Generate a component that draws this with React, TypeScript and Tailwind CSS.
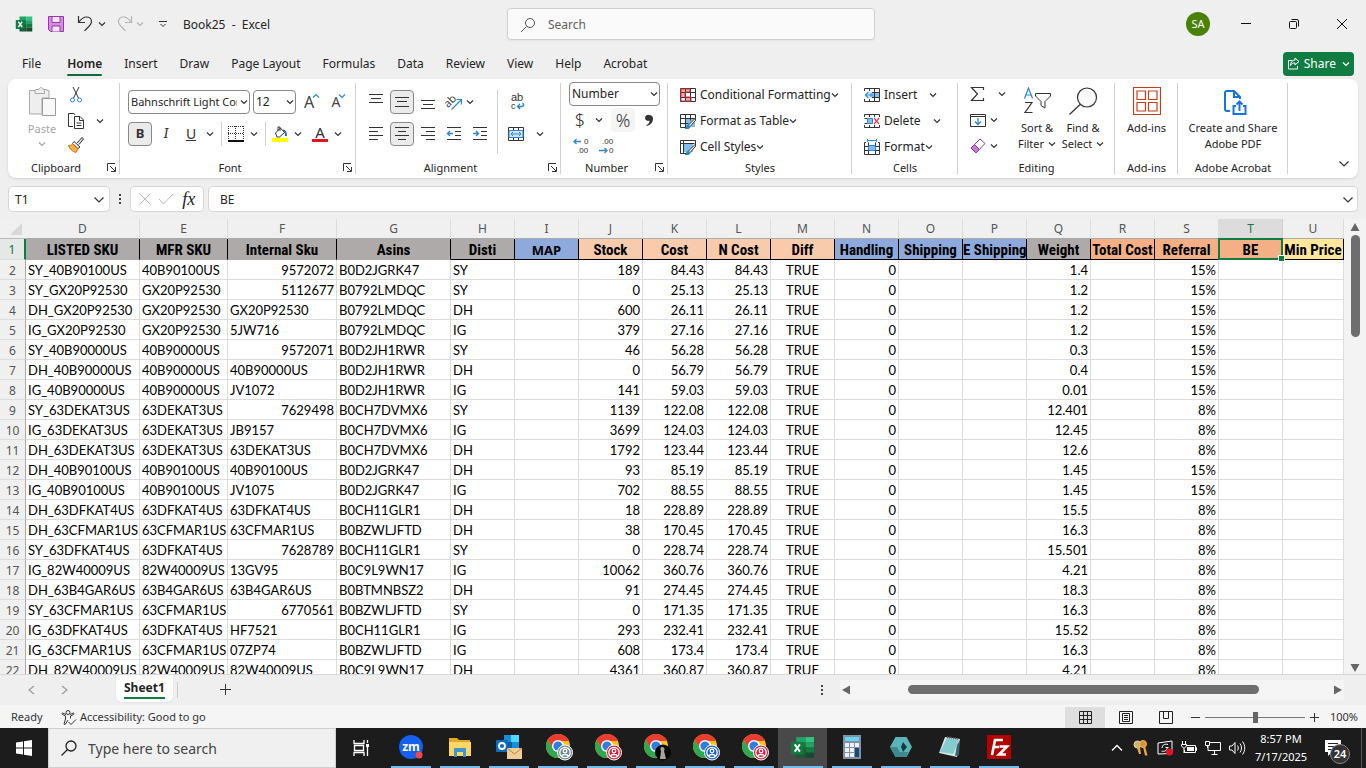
import React from 'react';
import clsx from 'clsx';

type Row = [string, string, string | number, string, string, string, string, string, string];

const rows: Row[] = [
  ['SY_40B90100US', '40B90100US', 9572072, 'B0D2JGRK47', 'SY', '189', '84.43', '1.4', '15%'],
  ['SY_GX20P92530', 'GX20P92530', 5112677, 'B0792LMDQC', 'SY', '0', '25.13', '1.2', '15%'],
  ['DH_GX20P92530', 'GX20P92530', 'GX20P92530', 'B0792LMDQC', 'DH', '600', '26.11', '1.2', '15%'],
  ['IG_GX20P92530', 'GX20P92530', '5JW716', 'B0792LMDQC', 'IG', '379', '27.16', '1.2', '15%'],
  ['SY_40B90000US', '40B90000US', 9572071, 'B0D2JH1RWR', 'SY', '46', '56.28', '0.3', '15%'],
  ['DH_40B90000US', '40B90000US', '40B90000US', 'B0D2JH1RWR', 'DH', '0', '56.79', '0.4', '15%'],
  ['IG_40B90000US', '40B90000US', 'JV1072', 'B0D2JH1RWR', 'IG', '141', '59.03', '0.01', '15%'],
  ['SY_63DEKAT3US', '63DEKAT3US', 7629498, 'B0CH7DVMX6', 'SY', '1139', '122.08', '12.401', '8%'],
  ['IG_63DEKAT3US', '63DEKAT3US', 'JB9157', 'B0CH7DVMX6', 'IG', '3699', '124.03', '12.45', '8%'],
  ['DH_63DEKAT3US', '63DEKAT3US', '63DEKAT3US', 'B0CH7DVMX6', 'DH', '1792', '123.44', '12.6', '8%'],
  ['DH_40B90100US', '40B90100US', '40B90100US', 'B0D2JGRK47', 'DH', '93', '85.19', '1.45', '15%'],
  ['IG_40B90100US', '40B90100US', 'JV1075', 'B0D2JGRK47', 'IG', '702', '88.55', '1.45', '15%'],
  ['DH_63DFKAT4US', '63DFKAT4US', '63DFKAT4US', 'B0CH11GLR1', 'DH', '18', '228.89', '15.5', '8%'],
  ['DH_63CFMAR1US', '63CFMAR1US', '63CFMAR1US', 'B0BZWLJFTD', 'DH', '38', '170.45', '16.3', '8%'],
  ['SY_63DFKAT4US', '63DFKAT4US', 7628789, 'B0CH11GLR1', 'SY', '0', '228.74', '15.501', '8%'],
  ['IG_82W40009US', '82W40009US', '13GV95', 'B0C9L9WN17', 'IG', '10062', '360.76', '4.21', '8%'],
  ['DH_63B4GAR6US', '63B4GAR6US', '63B4GAR6US', 'B0BTMNBSZ2', 'DH', '91', '274.45', '18.3', '8%'],
  ['SY_63CFMAR1US', '63CFMAR1US', 6770561, 'B0BZWLJFTD', 'SY', '0', '171.35', '16.3', '8%'],
  ['IG_63DFKAT4US', '63DFKAT4US', 'HF7521', 'B0CH11GLR1', 'IG', '293', '232.41', '15.52', '8%'],
  ['IG_63CFMAR1US', '63CFMAR1US', '07ZP74', 'B0BZWLJFTD', 'IG', '608', '173.4', '16.3', '8%'],
  ['DH_82W40009US', '82W40009US', '82W40009US', 'B0C9L9WN17', 'DH', '4361', '360.87', '4.21', '8%'],
];

const columns = [
  { letter: 'D', title: 'LISTED SKU', width: 'w-[114px]', fill: 'bg-[#aeaaaa]' },
  { letter: 'E', title: 'MFR SKU', width: 'w-[88px]', fill: 'bg-[#aeaaaa]' },
  { letter: 'F', title: 'Internal Sku', width: 'w-[109px]', fill: 'bg-[#aeaaaa]' },
  { letter: 'G', title: 'Asins', width: 'w-[114px]', fill: 'bg-[#aeaaaa]' },
  { letter: 'H', title: 'Disti', width: 'w-16', fill: 'bg-[#aeaaaa]' },
  { letter: 'I', title: 'MAP', width: 'w-16', fill: 'bg-[#8ea9db]' },
  { letter: 'J', title: 'Stock', width: 'w-16', fill: 'bg-[#f8cbad]' },
  { letter: 'K', title: 'Cost', width: 'w-16', fill: 'bg-[#f8cbad]' },
  { letter: 'L', title: 'N Cost', width: 'w-16', fill: 'bg-[#f8cbad]' },
  { letter: 'M', title: 'Diff', width: 'w-16', fill: 'bg-[#f8cbad]' },
  { letter: 'N', title: 'Handling', width: 'w-16', fill: 'bg-[#8ea9db]' },
  { letter: 'O', title: 'Shipping', width: 'w-16', fill: 'bg-[#8ea9db]' },
  { letter: 'P', title: 'E Shipping', width: 'w-16', fill: 'bg-[#8ea9db]' },
  { letter: 'Q', title: 'Weight', width: 'w-16', fill: 'bg-[#aeaaaa]' },
  { letter: 'R', title: 'Total Cost', width: 'w-16', fill: 'bg-[#f4b084]' },
  { letter: 'S', title: 'Referral', width: 'w-16', fill: 'bg-[#f4b084]' },
  { letter: 'T', title: 'BE', width: 'w-16', fill: 'bg-[#f4b084]' },
  { letter: 'U', title: 'Min Price', width: '', fill: 'bg-[#ffe699]' },
];

const Svg: React.FC<{ w?: number; h?: number; className?: string; children: React.ReactNode }> = ({ w = 16, h = 16, className, children }) => (
  <svg width={w} height={h} viewBox={`0 0 ${w} ${h}`} fill="none" stroke="#333" className={clsx('shrink-0', className)} aria-hidden="true">
    {children}
  </svg>
);

const Chevron: React.FC<{ color?: string; className?: string }> = ({ color = '#333', className }) => (
  <svg width="8" height="6" viewBox="0 0 8 6" fill="none" stroke={color} strokeWidth="1.2" className={clsx('shrink-0', className)} aria-hidden="true">
    <path d="M1 1.5 4 4.5 7 1.5" />
  </svg>
);

const BigChevron: React.FC = () => (
  <Svg w={12} h={8}><path d="M1.5 1.5 6 6 10.5 1.5" strokeWidth="1.2" /></Svg>
);

interface ToolProps {
  label: string;
  className?: string;
  children: React.ReactNode;
}

const Tool: React.FC<ToolProps> = ({ label, className, children }) => (
  <button type="button" aria-label={label} className={clsx('flex h-6 shrink-0 items-center justify-center', className)}>
    {children}
  </button>
);

const Drop: React.FC<{ label: string; className?: string }> = ({ label, className = 'w-4' }) => (
  <Tool label={label} className={className}><Chevron /></Tool>
);

const Launcher: React.FC<{ label: string }> = ({ label }) => (
  <button type="button" aria-label={label} className="absolute right-1 bottom-1.5">
    <Svg w={9} h={9}><path d="M.5 8V.5H8M3 3l5 5M8.5 4v4.5H4" /></Svg>
  </button>
);

interface GroupProps {
  name: string;
  width: string;
  launcher?: boolean;
  children: React.ReactNode;
}

const Group: React.FC<GroupProps> = ({ name, width, launcher, children }) => (
  <section aria-label={name} className={clsx('relative flex shrink-0 flex-col', width)}>
    <div className="flex-1">{children}</div>
    <div className={clsx('h-[18px] text-center text-[11px] leading-4', launcher && 'pr-4')}>{name}</div>
    {launcher && <Launcher label={`${name} settings`} />}
    <div className="absolute top-1 right-0 bottom-1 w-px bg-[#d1d1d1]"></div>
  </section>
);

const Lines: React.FC<{ d: string }> = ({ d }) => <Svg><path d={d} /></Svg>;

const GridIcon: React.FC<{ kind: string }> = ({ kind }) => (
  <Svg>
    {kind === 'conditional' && (
      <>
        <path d="M1 1h9v4H5v5H1zM5 10h6v4H5z" fill="#f4a6a6" stroke="none" />
        <path d="M.5 1.5h15v13H.5zM.5 5.5h15M.5 10.5h15M5.5 1.5v13M10.5 1.5v13" />
        <path d="M1 2h9v3H5v5h6v4H1z" stroke="#d13438" />
      </>
    )}
    {(kind === 'table' || kind === 'styles') && (
      <>
        <path d={kind === 'table' ? 'M5 5h10v9H5z' : 'M3 4h10v9H3z'} fill="#83beec" stroke="none" />
        <path d={kind === 'table' ? 'M8 14.5H.5v-13h15V6M.5 5.5h14M.5 10.5h8M5.5 1.5v13M10.5 1.5v6' : 'M7 14.5H.5v-13h15V6M.5 4.5h14M3.5 1.5v13'} />
        <path d="M15 5.5 8.5 12l-3 3.5c2 .3 3.8-.1 4.5-1.8L15.800 7z" fill="#fff" />
        <path d="M8.500 12c-2 .3-1.500 2.500-3 3.500 2 .3 4.500 0 4.500-2z" fill="#2b88d8" stroke="#2b88d8" />
      </>
    )}
    {kind === 'insert' && (
      <>
        <path d="M5.500 5.500h10v5h-10z" fill="#83beec" stroke="none" />
        <path d="M.5 4V1.500h15v13H.5V12M5.500 1.500V4M10.500 1.500v13M5.500 12v2.500M8 5.500h7.500M8 10.500h7.500" />
        <path d="M9 8H1.500M4.500 5 1.500 8l3 3" stroke="#2b88d8" strokeWidth="1.200" />
      </>
    )}
    {kind === 'delete' && (
      <>
        <path d="M3.500 5.500h5v5h-5z" fill="#83beec" stroke="#2b88d8" />
        <path d="M.5 4V1.500h15V4M.5 5.500H3M.5 10.500H3M.5 12v2.500h15V12M5.500 1.500V4M10.500 1.500V4M5.500 12v2.500M10.500 12v2.500" />
        <path d="m10 5 5 6M15 5l-5 6" stroke="#e0393e" strokeWidth="1.200" />
      </>
    )}
    {kind === 'format' && (
      <>
        <path d="M4.500 6.500h7v5h-7z" fill="#83beec" stroke="#2b88d8" />
        <path d="M2 3.500H.5v12h15v-12H14M.5 7.500h4M.5 11.500h4M11.500 7.500h4M11.500 11.500h4M4.500 11.500v4M11.500 11.500v4M4.500 3.500v3M11.500 3.500v3" />
        <path d="M3.500 0v3M12.500 0v3M4 1.500h8" stroke="#2b88d8" />
      </>
    )}
  </Svg>
);

const MenuRow: React.FC<{ kind: string; text: string; gap?: string }> = ({ kind, text, gap = 'gap-0' }) => (
  <button type="button" className="flex h-[26px] items-center gap-1">
    <GridIcon kind={kind} />
    <span className={clsx('flex items-center whitespace-nowrap', gap)}>{text}<Chevron /></span>
  </button>
);

const ExcelLogo: React.FC<{ size: number }> = ({ size }) => (
  <svg width={size} height={size} viewBox="0 0 24 24" aria-hidden="true">
    <path d="M6 2h9v10H6z" fill="#21a366" />
    <path d="M15 2h8v5h-8z" fill="#33c481" />
    <path d="M15 7h8v5h-8z" fill="#21a366" />
    <path d="M6 7h9v5H6z" fill="#107c41" />
    <path d="M6 12h9v10H6z" fill="#185c37" />
    <path d="M15 12h8v5h-8z" fill="#107c41" />
    <path d="M15 17h8v5h-8z" fill="#134d2e" />
    <rect x="1" y="6.500" width="12" height="12" rx="1" fill="#107c41" />
    <path d="m4.500 9 5 7M9.500 9l-5 7" stroke="#fff" strokeWidth="1.800" />
  </svg>
);

const TitleBar: React.FC = () => (
  <header className="flex h-12 shrink-0 items-center">
    <div className="flex w-[507px] shrink-0 items-center pl-[15px]">
      <ExcelLogo size={18} />
      <Tool label="Save" className="ml-3.5 w-[18px]">
        <Svg><path d="M.5.500h15v15h-13l-2-2z" fill="#d68fe0" stroke="#9a35b0" /><path d="M4 .5h8v6H4zM4 15.500V10h8v5.500" fill="#f6e8fa" stroke="#9a35b0" /></Svg>
      </Tool>
      <Tool label="Undo" className="ml-3 w-4">
        <Svg><path d="M1.500 0v6.500H8M1.500 6.500C4 3 6.500 1 9.500 1c3 0 5 2 5 4.500 0 4-4 5.500-7 9.500" strokeWidth="1.200" /></Svg>
      </Tool>
      <Drop label="Undo history" className="ml-0.5 w-3.5" />
      <Tool label="Redo" className="ml-2 w-4">
        <Svg><path d="M14.500 0v6.500H8M14.500 6.500C12 3 9.500 1 6.500 1c-3 0-5 2-5 4.500 0 4 4 5.500 7 9.500" strokeWidth="1.200" stroke="#b5b5b5" /></Svg>
      </Tool>
      <Tool label="Redo history" className="w-3.5"><Chevron color="#b5b5b5" /></Tool>
      <Tool label="Customize toolbar" className="ml-2 w-4">
        <Svg w={8} h={8}><path d="M0 1.500h8M1.500 4 4 6.500 6.500 4" /></Svg>
      </Tool>
      <span className="ml-3 pt-px whitespace-pre">Book25  -  Excel</span>
    </div>
    <label className="flex h-8 w-[368px] shrink-0 items-center rounded-sm border border-[#d0d0d0] bg-[#fafafa] pt-px pl-3 shadow-xs">
      <Svg><circle cx="10" cy="6" r="4.500" stroke="#555" /><path d="M6.500 9.500 1 15" stroke="#555" /></Svg>
      <input aria-label="Search" placeholder="Search" className="ml-3 flex-1 bg-transparent text-xs text-[#616161] outline-none placeholder:text-[#616161]" />
    </label>
    <div className="flex flex-1 items-center justify-end">
      <button type="button" className="mr-3 size-6 rounded-full bg-[#498205] text-[11px] text-white">SA</button>
      <Tool label="Minimize" className="w-12"><Svg w={10} h={10}><path d="M0 4.500h10" stroke="#111" /></Svg></Tool>
      <Tool label="Restore" className="w-12">
        <Svg w={10} h={10}><path d="M.5 3.500a1 1 0 0 1 1-1h5a1 1 0 0 1 1 1v5a1 1 0 0 1-1 1h-5a1 1 0 0 1-1-1zM2.500.500H8A1.500 1.500 0 0 1 9.500 2v5.500" stroke="#111" /></Svg>
      </Tool>
      <Tool label="Close" className="w-12"><Svg w={12} h={12}><path d="m1 1 10 10M11 1 1 11" stroke="#111" /></Svg></Tool>
    </div>
  </header>
);

const tabs = ['Insert', 'Draw', 'Page Layout', 'Formulas', 'Data', 'Review', 'View', 'Help', 'Acrobat'];

const Tabs: React.FC = () => (
  <nav className="flex h-[31px] shrink-0 items-center pr-3 pl-[22px]">
    <button type="button" className="mr-[26px]">File</button>
    <button type="button" className="relative mr-[22px] font-semibold">
      Home
      <span className="absolute -bottom-1 left-0 h-0.5 w-full rounded-full bg-[#0f6b3c]"></span>
    </button>
    <div className="flex flex-1 gap-[22px]">
      {tabs.map((tab) => (
        <button key={tab} type="button" className="whitespace-nowrap">{tab}</button>
      ))}
    </div>
    <button type="button" className="flex h-6 items-center gap-1 rounded bg-[#107c41] px-1 text-white">
      <Svg w={13} h={13}><path d="M5 3.500H1.500v8.500h9V9M8 1l4 3.500L8 8V6C6 6 4.500 6.500 3.500 8.500 3.500 5 5.500 3 8 3z" stroke="#fff" /></Svg>
      Share
      <Chevron color="#fff" className="ml-0.5" />
    </button>
  </nav>
);

const Ribbon: React.FC = () => (
  <div className="mx-2 flex h-[99px] shrink-0 overflow-hidden rounded-lg bg-white shadow-sm">
    <Group name="Clipboard" width="w-28" launcher>
      <div className="flex pl-4">
        <button type="button" className="flex w-9 flex-col items-center pt-2 text-[#a6a6a6]">
          <Svg w={28} h={30}>
            <path d="M1.500 3.500h6v-1h3.500C11 0 15 0 15 2.500h4v1h2V11h-7v16H1.500z" fill="#eee" stroke="#aaa" />
            <path d="M7 3v3.500h9.500V3" stroke="#aaa" />
            <path d="M14.500 11.500h13v17h-13z" fill="#f8f8f8" stroke="#999" />
          </Svg>
          <span className="mt-1 text-[11px] leading-4">Paste</span>
          <Chevron color="#a6a6a6" className="mt-1" />
        </button>
        <div className="flex flex-col pt-1">
          <Tool label="Cut" className="w-8">
            <Svg><path d="m5 0 5.500 11M11 0 5.500 11" /><circle cx="4.500" cy="13" r="2" stroke="#2b88d8" /><circle cx="11.500" cy="13" r="2" stroke="#2b88d8" /></Svg>
          </Tool>
          <div className="mt-0.5 flex">
            <Tool label="Copy" className="w-8">
              <Svg><path d="M5 13.500H.5V.5H6l1 1.500" /><path d="M6.500 3.500h5.500l3.500 3.500v8.500h-9zM11.500 3.500v4h4M8.500 10h5M8.500 12.500h5" /></Svg>
            </Tool>
            <Drop label="Copy options" />
          </div>
          <Tool label="Format painter" className="w-8">
            <Svg><path d="m9 6 5-5.500L15.500 2 11 7.500" fill="#ddd" /><path d="m6 4.500 6 5.500-2 1.500-5.500-5z" fill="#fff" /><path d="M4.500 7C3 8.500 2 8.500.5 8.500 2 12 4 14.500 8 15.500L10 12z" fill="#f9b04a" stroke="#d8730a" /></Svg>
          </Tool>
        </div>
      </div>
    </Group>

    <Group name="Font" width="w-[236px]" launcher>
      <div className="flex flex-col gap-2 pt-[11px] pl-2">
        <div className="flex items-center">
          <div className="relative">
            <select aria-label="Font name" className="h-6 w-[122px] appearance-none rounded border border-[#888] bg-white pr-3 pl-0.5 text-[11px]">
              <option>Bahnschrift Light Condensed</option>
            </select>
            <Chevron className="pointer-events-none absolute top-[9px] right-0.5" />
          </div>
          <div className="relative ml-[3px]">
            <select aria-label="Font size" className="h-6 w-[43px] appearance-none rounded border border-[#888] bg-white pl-0.5">
              <option>12</option>
            </select>
            <Chevron className="pointer-events-none absolute top-[9px] right-0.5" />
          </div>
          <Tool label="Increase font size" className="ml-0.5 w-7"><span className="text-base text-[#444]">A</span><Chevron color="#2b88d8" className="mb-3 -ml-0.5 rotate-180" /></Tool>
          <Tool label="Decrease font size" className="w-[26px]"><span className="text-sm text-[#444]">A</span><Chevron color="#2b88d8" className="mb-3 -ml-0.5" /></Tool>
        </div>
        <div className="flex items-center">
          <Tool label="Bold" className="w-6 rounded border border-[#888] bg-[#ebebeb] text-[13px] font-bold text-[#333]">B</Tool>
          <Tool label="Italic" className="w-7 font-serif text-[15px] text-[#333] italic">I</Tool>
          <Tool label="Underline" className="w-[22px] text-sm text-[#333] underline">U</Tool>
          <Drop label="Underline style" />
          <div className="ml-[3px] h-6 w-px bg-[#d1d1d1]"></div>
          <Tool label="Borders" className="ml-1.5 w-4">
            <Svg><path d="M.5 0v15M7.500 0v15M15.500 0v15M0 .5h16M0 7.500h16" strokeDasharray="1 1" /><path d="M0 15h16" strokeWidth="2" stroke="#111" /></Svg>
          </Tool>
          <Drop label="Border style" className="ml-0.5 w-4" />
          <div className="ml-[3px] h-6 w-px bg-[#d1d1d1]"></div>
          <Tool label="Fill color" className="ml-1.5 w-4">
            <Svg><path d="m3.500 7 5-5 4 4.500-5 4.500H5z" /><path d="M6 5V1h2v4" /><path d="M11 4.500c3 0 3 3 3 5.500" stroke="#2b6cb0" strokeWidth="2" /><path d="M0 14h16" stroke="#ff0" strokeWidth="4" /></Svg>
          </Tool>
          <Drop label="Fill colors" className="ml-0.5 w-4" />
          <Tool label="Font color" className="ml-1 w-5">
            <span className="relative flex h-5 w-4 justify-center text-[15px] leading-4 text-[#333]">A<span className="absolute bottom-0.5 left-0 h-[3px] w-4 bg-[#e81123]"></span></span>
          </Tool>
          <Drop label="Font colors" />
        </div>
      </div>
    </Group>

    <Group name="Alignment" width="w-[205px]" launcher>
      <div className="flex pt-[11px] pl-[7px]">
        <div className="flex flex-col gap-2">
          <div className="flex">
            <Tool label="Top align" className="w-[26px]"><Lines d="M1 .5h14M3 4.500h10M1 8.500h14" /></Tool>
            <Tool label="Middle align" className="mx-px w-6 rounded border border-[#888] bg-[#ebebeb]"><Lines d="M1 3.500h14M3 7.500h10M1 12.500h14" /></Tool>
            <Tool label="Bottom align" className="w-[26px]"><Lines d="M1 6.500h14M3 10.500h10M1 14.500h14" /></Tool>
            <Tool label="Orientation" className="w-[26px]">
              <Svg w={18} h={18} className="overflow-visible"><text x="-1" y="12" fontSize="11" fill="#444" stroke="none" transform="rotate(-45 5 9)">ab</text><path d="M6.500 16.500 16 7M11.500 6.500h5v5" stroke="#2b88d8" strokeWidth="1.200" /></Svg>
            </Tool>
            <Drop label="Orientation options" className="w-[26px] pr-5" />
          </div>
          <div className="flex">
            <Tool label="Align left" className="w-[26px]"><Lines d="M1 1.500h14M1 5.500h9M1 9.500h14M1 13.500h9" /></Tool>
            <Tool label="Center" className="mx-px w-6 rounded border border-[#888] bg-[#ebebeb]"><Lines d="M1 1.500h14M4 5.500h8M1 9.500h14M4 13.500h8" /></Tool>
            <Tool label="Align right" className="w-[26px]"><Lines d="M1 1.500h14M6 5.500h9M1 9.500h14M6 13.500h9" /></Tool>
            <Tool label="Decrease indent" className="w-[26px]">
              <Svg><path d="M1 1.500h14M9 5.500h6M9 9.500h6M1 13.500h14" /><path d="M7 7.500H1.500M4 5 1.500 7.500 4 10" stroke="#2b88d8" strokeWidth="1.400" /></Svg>
            </Tool>
            <Tool label="Increase indent" className="w-[26px]">
              <Svg><path d="M1 1.500h14M9 5.500h6M9 9.500h6M1 13.500h14" /><path d="M1 7.500h5.500M4 5l2.500 2.500L4 10" stroke="#2b88d8" strokeWidth="1.400" /></Svg>
            </Tool>
          </div>
        </div>
        <div className="ml-1 h-16 w-px bg-[#d1d1d1]"></div>
        <div className="ml-2 flex flex-col gap-2">
          <Tool label="Wrap text" className="ml-0.5 w-5">
            <Svg h={20} className="font-['Liberation_Sans',sans-serif]"><text x="1" y="9" fontSize="11" fill="#333" stroke="none">ab</text><text x="1" y="17" fontSize="9" fill="#333" stroke="none">c</text><path d="M12.500 11c3 2 0 4.500-5 3.500M10 12l-2.500 2.500L10 17" stroke="#2b88d8" strokeWidth="1.400" /></Svg>
          </Tool>
          <div className="flex">
            <Tool label="Merge cells" className="w-5">
              <Svg><path d="M.5 1.500h15v13H.5zM5.500 1.500v3M10.500 1.500v3M5.500 12v2.500M10.500 12v2.500" /><path d="M1 4.500h14v7H1z" fill="#cfe6f8" stroke="#2b88d8" /><path d="M3 8h10M5 6 3 8l2 2M11 6l2 2-2 2" stroke="#2b88d8" /></Svg>
            </Tool>
            <Drop label="Merge options" className="ml-0.5 w-6" />
          </div>
        </div>
      </div>
    </Group>

    <Group name="Number" width="w-[107px]" launcher>
      <div className="pt-[3px] pl-2">
        <div className="relative w-[91px]">
          <select aria-label="Number format" className="h-6 w-full appearance-none rounded border border-[#888] bg-white pl-0.5">
            <option>Number</option>
          </select>
          <Chevron className="pointer-events-none absolute top-[9px] right-0.5" />
        </div>
        <div className="mt-0.5 flex text-[#333]">
          <Tool label="Currency" className="w-[22px] text-lg font-light">$</Tool>
          <Drop label="Currency options" />
          <Tool label="Percent" className="ml-1 w-6 rounded bg-[#f5f5f5] text-lg font-light">%</Tool>
          <Tool label="Comma style" className="ml-1.5 w-4">
            <Svg w={9} h={13}><path d="M4 1a3 3 0 1 0 .5 5.500C4.500 8.500 3.500 10 1.500 11v1C6 11 8 8 8 4.500 8 2.500 6.500 1 4 1z" fill="#333" stroke="none" /></Svg>
          </Tool>
        </div>
        <div className="mt-0.5 flex gap-[2px] font-['Liberation_Sans',sans-serif]">
          <Tool label="Increase decimal" className="w-6">
            <Svg h={18}><text x="11" y="7" fontSize="8" fill="#333" stroke="none">0</text><text x="4" y="16" fontSize="8" fill="#333" stroke="none">.00</text><path d="M8 4.500H1M3.500 2 1 4.500 3.500 7" stroke="#2b88d8" strokeWidth="1.300" /></Svg>
          </Tool>
          <Tool label="Decrease decimal" className="w-6">
            <Svg h={18}><text x="3" y="7" fontSize="8" fill="#333" stroke="none">.00</text><text x="10" y="16" fontSize="8" fill="#333" stroke="none">0</text><path d="M0 13.500h8M5.500 11 8 13.500 5.500 16" stroke="#2b88d8" strokeWidth="1.300" /></Svg>
          </Tool>
        </div>
      </div>
    </Group>

    <Group name="Styles" width="w-[184px]">
      <div className="pt-[3px] pl-3">
        <MenuRow kind="conditional" text="Conditional Formatting" />
        <MenuRow kind="table" text="Format as Table" />
        <MenuRow kind="styles" text="Cell Styles" />
      </div>
    </Group>

    <Group name="Cells" width="w-[106px]">
      <div className="pt-[3px] pl-3">
        <MenuRow kind="insert" text="Insert" gap="gap-3" />
        <MenuRow kind="delete" text="Delete" gap="gap-3" />
        <MenuRow kind="format" text="Format" />
      </div>
    </Group>

    <Group name="Editing" width="w-[157px]">
      <div className="flex pl-3">
        <div className="flex w-9 flex-col gap-0.5 pt-[3px]">
          <div className="flex">
            <Tool label="Sum" className="w-4"><Svg><path d="M13.500 4V1.500h-12l6 6.500-6 6.500h12V12" strokeWidth="1.200" /></Svg></Tool>
            <Drop label="Sum options" className="ml-2 w-4" />
          </div>
          <div className="flex">
            <Tool label="Fill" className="w-4"><Svg><path d="M.5 2.500h15v12H.5zM.5 4.500h15" /><path d="M8 6v6.500M5 9.500l3 3 3-3" stroke="#2b88d8" strokeWidth="1.300" /></Svg></Tool>
            <Drop label="Fill options" />
          </div>
          <div className="flex">
            <Tool label="Clear" className="w-4"><Svg><path d="m1 10 9-9 5 4.500L6 15z" stroke="#8a3ba0" fill="#fff" /><path d="m1 10 3.500-3.500 5 5L6 15z" fill="#c779d6" stroke="#8a3ba0" /></Svg></Tool>
            <Drop label="Clear options" />
          </div>
        </div>
        <button type="button" className="ml-2 flex w-[46px] flex-col items-center pt-2 text-[11px] leading-4">
          <Svg w={28} h={28} className="mb-[5px]">
            <path d="M1.500 11.500 5.500 1l4 10.500M3 8h5" stroke="#2b88d8" strokeWidth="1.200" />
            <path d="M2 15.500h7L2 25.500h7.500" strokeWidth="1.200" />
            <path d="M12.500 6.500h15v2.500l-5.500 5.500v6.500l-4-2.500v-4L12.500 9z" />
          </Svg>
          <span className="whitespace-nowrap">Sort &amp;</span>
          <span className="flex items-center gap-1">Filter<Chevron /></span>
        </button>
        <button type="button" className="flex w-[46px] flex-col items-center pt-2 text-[11px] leading-4">
          <Svg w={30} h={28} className="mb-[5px]"><circle cx="19" cy="10.500" r="9.500" strokeWidth="1.200" fill="#fafafa" /><path d="M12 17.500 1.500 27.500" strokeWidth="1.200" /></Svg>
          <span className="whitespace-nowrap">Find &amp;</span>
          <span className="flex items-center gap-1">Select<Chevron /></span>
        </button>
      </div>
    </Group>

    <Group name="Add-ins" width="w-[63px]">
      <button type="button" className="flex w-full flex-col items-center pt-2 text-[11px] leading-4">
        <Svg w={28} h={28} className="mb-[5px]"><path d="M.5.500h27v27H.5zM4 4h8.500v8.500H4zM15.500 4H24v8.500h-8.500zM4 15.500h8.500V24H4zM15.500 15.500H24V24h-8.500z" stroke="#c43e1c" strokeWidth="1.200" /></Svg>
        Add-ins
      </button>
    </Group>

    <Group name="Adobe Acrobat" width="w-[110px]">
      <button type="button" className="flex w-full flex-col items-center pt-2 text-[11px] leading-4">
        <Svg w={28} h={28} className="mb-[5px]">
          <path d="M11 24H8a2 2 0 0 1-2-2V6a2 2 0 0 1 2-2h7l6 6v2M15 4v6h6" stroke="#1473e6" strokeWidth="2" />
          <path d="M17 19h-2.500v8h12v-8H24M20.500 24v-9M17.500 17.500l3-3 3 3" stroke="#1473e6" strokeWidth="2" />
        </Svg>
        <span className="whitespace-nowrap">Create and Share</span>
        <span>Adobe PDF</span>
      </button>
    </Group>
    <div className="flex flex-1 items-end justify-end pr-2 pb-2.5">
      <button type="button" aria-label="Collapse ribbon"><BigChevron /></button>
    </div>
  </div>
);

const FormulaBar: React.FC = () => (
  <div className="mx-2 mt-2 flex h-[26px] shrink-0 items-center">
    <div className="flex h-full w-[102px] items-center rounded border border-[#d6d6d6] bg-white pt-px pr-1">
      <input aria-label="Name box" defaultValue="T1" className="w-0 flex-1 pl-1.5 text-xs outline-none" />
      <BigChevron />
    </div>
    <Svg w={4} h={12} className="mx-2"><path d="M1 1h2v2H1zM1 5h2v2H1zM1 9h2v2H1z" fill="#444" stroke="none" /></Svg>
    <div className="flex h-full w-[74px] items-center justify-around rounded border border-[#d6d6d6] bg-white px-1">
      <button type="button" aria-label="Cancel"><Svg w={12} h={12}><path d="m.5.500 11 11M11.500.500l-11 11" stroke="#b8b8b8" /></Svg></button>
      <button type="button" aria-label="Enter"><Svg w={16} h={12}><path d="m1 6 4.500 5L15 1" stroke="#b8b8b8" /></Svg></button>
      <button type="button" aria-label="Insert function" className="font-['Liberation_Serif',serif] text-lg leading-5 italic">fx</button>
    </div>
    <div className="ml-1 flex h-full flex-1 items-center rounded border border-[#d6d6d6] bg-white pt-px pr-[3px]">
      <input aria-label="Formula" defaultValue="BE" className="flex-1 pl-[11px] text-xs outline-none" />
      <BigChevron />
    </div>
  </div>
);

const cell = 'h-5 border-r border-b border-[#dcdcdc] p-0 px-0.5 pt-0.5 whitespace-nowrap';

const Sheet: React.FC = () => (
  <div className="mt-[7px] flex min-h-0 flex-1">
    <div className="min-w-0 flex-1 overflow-hidden">
      <table className="w-full min-w-[1344px] table-fixed border-separate border-spacing-0 bg-white font-[Lato,sans-serif] text-[13px] leading-[17px] text-black">
        <colgroup>
          <col className="w-[26px]" />
          {columns.map((c) => <col key={c.letter} className={c.width} />)}
        </colgroup>
        <thead className="font-['Noto_Sans',sans-serif] text-xs text-[#555]">
          <tr>
            <th aria-label="Select all" className="h-5 border-b border-[#bbb] bg-[#f0f0f0] p-0">
              <Svg w={12} h={12} className="ml-2.5"><path d="M12 0v12H0z" fill="#d8d8d8" stroke="none" /></Svg>
            </th>
            {columns.map((c) => (
              <th
                key={c.letter}
                scope="col"
                className={clsx(
                  'h-5 border-r border-b p-0 font-normal',
                  c.letter === 'T' ? 'border-[#107c41] border-r-[#d0d0d0] bg-[#dcdcdc] text-[#217346]' : 'border-[#aaa] border-r-[#dcdcdc] bg-[#f0f0f0]',
                )}
              >
                {c.letter}
              </th>
            ))}
          </tr>
        </thead>
        <tbody>
          <tr>
            <th scope="row" className="h-[21px] border-r-2 border-b border-[#dcdcdc] border-r-[#107c41] bg-[#e4e8e6] p-0 pt-0.5 font-['Noto_Sans',sans-serif] text-xs font-normal text-[#217346]">1</th>
            {columns.map((c, i) => (
              <th
                key={c.letter}
                className={clsx(
                  'relative h-[21px] border-r border-b border-black p-0 pt-0.5 leading-[18px] font-bold',
                  c.letter === 'I' ? "font-['Noto_Sans',sans-serif] text-[13px]" : "font-['Roboto_Condensed',Roboto,sans-serif] text-[15px]",
                  c.fill,
                  i < 4 && 'border-b-[#aeaaaa]',
                )}
              >
                <div className="text-center whitespace-nowrap">{c.title}</div>
                {c.letter === 'T' && (
                  <span className="absolute -top-px -right-px -bottom-px -left-px z-10 border-2 border-[#107c41]">
                    <span className="absolute -right-[3px] -bottom-[3px] size-[5px] bg-[#107c41] outline outline-white"></span>
                  </span>
                )}
              </th>
            ))}
          </tr>
          {rows.map(([sku, mfr, internal, asin, disti, stock, cost, weight, referral], i) => (
            <tr key={i}>
              <th scope="row" className="h-5 border-r border-b border-[#dcdcdc] border-r-[#aaa] bg-[#f0f0f0] p-0 pt-0.5 font-['Noto_Sans',sans-serif] text-xs leading-[17px] font-normal text-[#555]">{i + 2}</th>
              <td className={cell}>{sku}</td>
              <td className={cell}>{mfr}</td>
              <td className={clsx(cell, typeof internal === 'number' && 'text-right')}>{internal}</td>
              <td className={cell}>{asin}</td>
              <td className={cell}>{disti}</td>
              <td className={cell}></td>
              <td className={clsx(cell, 'text-right')}>{stock}</td>
              <td className={clsx(cell, 'text-right')}>{cost}</td>
              <td className={clsx(cell, 'text-right')}>{cost}</td>
              <td className={clsx(cell, 'text-center')}>TRUE</td>
              <td className={clsx(cell, 'text-right')}>0</td>
              <td className={cell}></td>
              <td className={cell}></td>
              <td className={clsx(cell, 'text-right')}>{weight}</td>
              <td className={cell}></td>
              <td className={clsx(cell, 'text-right')}>{referral}</td>
              <td className={cell}></td>
              <td className={cell}></td>
            </tr>
          ))}
        </tbody>
      </table>
    </div>
    <div className="flex w-[22px] shrink-0 flex-col items-center bg-[#f3f3f3] pt-1 pb-0.5">
      <Svg w={10} h={8}><path d="m5 0 4.500 8h-9z" fill="#666" stroke="none" /></Svg>
      <div className="mt-1 h-[102px] w-[9px] rounded-full bg-[#6e6e6e]"></div>
      <Svg w={10} h={8} className="mt-auto"><path d="M5 8 .5 0h9z" fill="#666" stroke="none" /></Svg>
    </div>
  </div>
);

const SheetTabs: React.FC = () => (
  <div className="flex h-[31px] shrink-0 items-center border-t border-[#d8d8d8] pb-px">
    <div className="flex w-[116px] gap-[22px] pl-[27px]">
      <button type="button" aria-label="Previous sheet"><Svg w={10} h={10}><path d="M7 1 2 5l5 4" stroke="#999" strokeWidth="1.200" /></Svg></button>
      <button type="button" aria-label="Next sheet"><Svg w={10} h={10}><path d="m3 1 5 4-5 4" stroke="#999" strokeWidth="1.200" /></Svg></button>
    </div>
    <button type="button" className="mb-0.5 h-[27px] rounded-b-md bg-white px-2 pt-px font-bold shadow-xs">
      <span className="block border-b-2 border-[#107c41] leading-[18px]">Sheet1</span>
    </button>
    <div className="ml-1 h-4 w-px bg-[#ccc]"></div>
    <button type="button" aria-label="New sheet" className="ml-[42px]"><Svg w={11} h={11}><path d="M5.500 0v11M0 5.500h11" /></Svg></button>
    <div className="flex-1"></div>
    <Svg w={4} h={12} className="mr-4"><path d="M1 1h2v2H1zM1 5h2v2H1zM1 9h2v2H1z" fill="#444" stroke="none" /></Svg>
    <div className="mr-[22px] flex h-5 w-[504px] items-center bg-[#f5f5f5]">
      <Svg w={8} h={10} className="ml-0.5"><path d="M0 5 8 .5v9z" fill="#666" stroke="none" /></Svg>
      <div className="ml-[58px] h-[9px] w-[351px] rounded-full bg-[#6e6e6e]"></div>
      <Svg w={8} h={10} className="mr-0.5 ml-auto"><path d="M8 5 0 .5v9z" fill="#666" stroke="none" /></Svg>
    </div>
  </div>
);

const StatusBar: React.FC = () => (
  <div className="flex h-[23px] shrink-0 items-center bg-[#f5f5f5] pt-0.5 text-[11px] text-[#333]">
    <span className="w-[61px] pl-[11px]">Ready</span>
    <button type="button" className="flex items-center gap-[3px]">
      <Svg><circle cx="7" cy="2.500" r="2" /><path d="M5 4.500 1.500 3c-1 .5-.5 1.500 0 1.500L4.500 6v3L3 14c.5 1 1.500.5 1.500 0L7 10M9 4.500 12.500 3c1 .5.500 1.500 0 1.500L9.500 6v2.500M7.500 12l2.500 2.500 5-5" /></Svg>
      Accessibility: Good to go
    </button>
    <div className="flex-1"></div>
    <button type="button" aria-label="Normal view" className="flex h-full w-10 items-center justify-center bg-[#dedede]"><Svg w={13} h={13}><path d="M.5.500h12v12H.5zM.5 4.500h12M.5 8.500h12M4.500.500v12M8.500.500v12" stroke="#222" /></Svg></button>
    <button type="button" aria-label="Page layout view" className="flex w-[41px] justify-center"><Svg w={14} h={13}><path d="M.5.500h13v12H.5zM3.500 2.500h7v8h-7zM5 4.500h4M5 6.500h4M5 8.500h4" stroke="#222" /></Svg></button>
    <button type="button" aria-label="Page break preview" className="flex w-10 justify-center"><Svg w={14} h={13}><path d="M.5.500h13v12H.5zM4.500.500v7M9.500.500v7M4.500 7.500h5" stroke="#222" /></Svg></button>
    <button type="button" aria-label="Zoom out" className="ml-1"><Svg w={11} h={11}><path d="M1 5.500h9" /></Svg></button>
    <input
      type="range"
      aria-label="Zoom"
      defaultValue={50}
      className="mx-1 h-px w-[100px] appearance-none bg-[#777] [&::-webkit-slider-thumb]:h-[11px] [&::-webkit-slider-thumb]:w-[5px] [&::-webkit-slider-thumb]:appearance-none [&::-webkit-slider-thumb]:bg-[#666]"
    />
    <button type="button" aria-label="Zoom in"><Svg w={11} h={11}><path d="M1 5.500h9M5.500 1v9" /></Svg></button>
    <span className="w-[46px] pr-2 text-right">100%</span>
  </div>
);

const Chrome: React.FC<{ badge: string; photo?: boolean }> = ({ badge, photo }) => (
  <svg width="27" height="27" viewBox="0 0 27 27" className="ml-1" aria-hidden="true">
    <circle cx="12" cy="12" r="12" fill="#fbc116" />
    <path d="M1.600 6A12 12 0 0 1 22.400 6L22.400 7H12L7 15z" fill="#ea3d2f" />
    <path d="M1.600 6A12 12 0 0 0 12 24l5-9-5 2-5-2z" fill="#2da94f" />
    <circle cx="12" cy="12" r="6" fill="#fff" />
    <circle cx="12" cy="12" r="4.600" fill="#2f7de1" />
    <circle cx="19" cy="18.500" r="7.500" fill={photo ? '#050505' : badge} stroke={photo ? '#050505' : '#fff'} />
    {photo ? (
      <path d="M18 13c3 0 3 3 2 4l2 8h-6l1-8c-1-2-.5-4 1-4z" fill="#a8a29a" />
    ) : (
      <g fill="none" stroke="#fff" strokeWidth="1.300">
        <circle cx="19" cy="18.500" r="5.200" />
        <circle cx="19" cy="17" r="1.800" />
        <path d="M15.500 22c1-2 6-2 7 0" />
      </g>
    )}
  </svg>
);

const apps: { name: string; icon: React.ReactNode }[] = [
  {
    name: 'Zoom',
    icon: (
      <svg width="24" height="24" viewBox="0 0 24 24" aria-hidden="true">
        <circle cx="12" cy="12" r="12" fill="#1460f0" />
        <text x="12" y="16" textAnchor="middle" fontSize="12" fontWeight="700" fill="#fff">zm</text>
        <circle cx="20" cy="20" r="3.500" fill="#f04848" />
      </svg>
    ),
  },
  {
    name: 'File Explorer',
    icon: (
      <svg width="24" height="24" viewBox="0 0 24 24" aria-hidden="true">
        <path d="M1 3h8l2 2h11v16H1z" fill="#e5a823" />
        <path d="M1 7h22v14H1z" fill="#ffd766" />
        <path d="M6 13h12v9h-3v-5H9v5H6z" fill="#3d94d1" />
      </svg>
    ),
  },
  {
    name: 'Outlook',
    icon: (
      <svg width="27" height="26" viewBox="0 0 27 26" className="ml-0.5" aria-hidden="true">
        <path d="M8 1h15v14H8z" fill="#1490df" />
        <path d="M15 1h8v7h-8z" fill="#50d9ff" />
        <path d="M8 8h8v9H8z" fill="#0a5ca8" />
        <rect y="6" width="12" height="12" rx="1" fill="#0f6cbd" />
        <circle cx="6" cy="12" r="3" fill="none" stroke="#fff" strokeWidth="1.800" />
        <path d="M11 14h15v11H11z" fill="#f3cd97" />
        <path d="m11 14 7.500 6 7.500-6" fill="none" stroke="#b88038" />
      </svg>
    ),
  },
  { name: 'Chrome profile 1', icon: <Chrome badge="#6f8792" /> },
  { name: 'Chrome profile 2', icon: <Chrome badge="#d21f3c" /> },
  { name: 'Chrome profile 3', icon: <Chrome badge="#000" photo /> },
  { name: 'Chrome profile 4', icon: <Chrome badge="#1a5fc8" /> },
  { name: 'Chrome profile 5', icon: <Chrome badge="#d21f3c" /> },
  { name: 'Excel', icon: <ExcelLogo size={25} /> },
  {
    name: 'Calculator',
    icon: (
      <svg width="20" height="24" viewBox="0 0 20 24" aria-hidden="true">
        <path d="M1 0h18v24H1z" fill="#8392a3" />
        <path d="M3 2h14v4H3z" fill="#68d5f5" />
        <path d="M3 8h4v4H3zM8 8h4v4H8zM13 8h4v4h-4zM3 13h4v4H3zM8 13h4v4H8zM3 18h4v4H3zM8 18h4v4H8z" fill="#eef2f5" />
        <path d="M13 13h4v9h-4z" fill="#17487c" />
      </svg>
    ),
  },
  {
    name: 'Hexnode',
    icon: (
      <svg width="22" height="22" viewBox="0 0 22 22" aria-hidden="true">
        <path d="M5.500 1h11L22 11l-5.500 10h-11L0 11z" fill="#5bb5b8" />
        <path d="M0 11h7l3 5h8l-1.500 5h-11z" fill="#3d898f" />
        <path d="m13 6 4 5-4 5-2-5z" fill="#113c44" />
      </svg>
    ),
  },
  {
    name: 'Notepad',
    icon: (
      <svg width="24" height="24" viewBox="0 0 24 24" aria-hidden="true">
        <path d="m7 2 15 2-3 18-18-4z" fill="#d7e7e8" />
        <path d="m9 3 12 2-6 14L2 17z" fill="#84ccd0" />
        <path d="m9 2 12 2" stroke="#555" strokeWidth="2" strokeDasharray="1 1" />
        <path d="m19 10-2 11 4-1 1-15z" fill="#356570" />
      </svg>
    ),
  },
  {
    name: 'FileZilla',
    icon: (
      <svg width="24" height="24" viewBox="0 0 24 24" aria-hidden="true">
        <path d="M0 0h24v24H0z" fill="#b50000" />
        <path d="M5 20 8 5h8M6.500 12H12M12.500 11.500H20l-8 8h7" fill="none" stroke="#fff" strokeWidth="2.600" />
      </svg>
    ),
  },
];

const TrayIcon: React.FC<{ label: string; children: React.ReactNode }> = ({ label, children }) => (
  <button type="button" aria-label={label} className="flex w-6 shrink-0 justify-center">{children}</button>
);

const Taskbar: React.FC = () => (
  <footer className="flex h-10 shrink-0 items-center bg-[#1c1c1c] text-white">
    <button type="button" aria-label="Start" className="flex w-12 shrink-0 justify-center">
      <Svg><path d="m0 2.500 7-1v6H0zM8 1.300 16 0v7.500H8zM0 8.500h7v6l-7-1zM8 8.500h8V16l-8-1.300z" fill="#fff" stroke="none" /></Svg>
    </button>
    <label className="flex h-10 w-72 shrink-0 items-center border border-[#cfcfcf] bg-[#f0f0f0] pl-3">
      <Svg><circle cx="10" cy="6" r="5" stroke="#222" strokeWidth="1.300" /><path d="M6.500 9.500.500 15.500" stroke="#222" strokeWidth="1.300" /></Svg>
      <input aria-label="Search Windows" placeholder="Type here to search" className="ml-[11px] w-0 flex-1 bg-transparent pt-0.5 text-sm outline-none placeholder:text-[#444]" />
    </label>
    <button type="button" aria-label="Task view" className="flex w-[50px] shrink-0 justify-center">
      <Svg w={17}><path d="M1 0v3.500h10V0M1 16v-3.500h10V16M1.500 5.500h9v5h-9zM14.500 0v3M14.500 7v9" stroke="#fff" strokeWidth="1.300" /><path d="M13 4h3v3h-3z" fill="#fff" stroke="none" /></Svg>
    </button>
    {apps.map((app) => (
      <button
        key={app.name}
        type="button"
        aria-label={app.name}
        className={clsx('flex h-10 w-[49px] shrink-0 flex-col items-center', app.name === 'Excel' && 'bg-[#494949]')}
      >
        <span className="flex flex-1 items-center">{app.icon}</span>
        <span className="h-0.5 w-10 bg-[#76b9ed]"></span>
      </button>
    ))}
    <div className="flex-1"></div>
    <TrayIcon label="Hidden icons"><Svg w={12} h={8}><path d="m1 6.500 5-5 5 5" stroke="#fff" strokeWidth="1.300" /></Svg></TrayIcon>
    <TrayIcon label="Password manager">
      <Svg><circle cx="4.500" cy="4.500" r="3.500" fill="#c7b27a" stroke="#e8d9a8" /><circle cx="10" cy="4" r="3.500" fill="#d9942a" stroke="#f0b95a" /><path d="m4 8 2 6h2L7 7zM10 7l2 8.500h2.500L12 6z" fill="#e3a948" stroke="none" /></Svg>
    </TrayIcon>
    <TrayIcon label="Sync">
      <Svg><path d="m1 3 14-2v12.500L1 14zM11 4.500C8 3.500 5 5 5 8M4.500 11C7 12 10 11 10.500 7M8.500 7.500h3" stroke="#fff" /><circle cx="12.500" cy="12" r="3.500" fill="#e81123" stroke="none" /></Svg>
    </TrayIcon>
    <TrayIcon label="Battery">
      <Svg><path d="M5 5.500h9.500v7H3.500V10M14.500 7.500h1v3h-1" stroke="#fff" /><path d="M6 7h7v4H6z" fill="#fff" stroke="none" /><path d="M1.500 1v3M4.500 1v3M.500 4.500h5v1.500L3.500 8h-1L.500 6zM3 8v5" stroke="#fff" /></Svg>
    </TrayIcon>
    <TrayIcon label="Network">
      <Svg><path d="M5 2.500h10.500v8H3V6M9.500 10.500V14M6.500 14.500h6M.500 1.500h4v4h-4zM2.500 5.500V8" stroke="#fff" /></Svg>
    </TrayIcon>
    <TrayIcon label="Volume">
      <Svg w={17}><path d="M.500 6H3l3-3.500v11L3 10H.500zM8.500 5.500c1 1.500 1 3.500 0 5M11 3.500c2 2.500 2 6.500 0 9M13.500 1.500c3 4 3 9 0 13" stroke="#fff" /></Svg>
    </TrayIcon>
    <time className="w-16 shrink-0 text-center text-[11px] leading-[18px]">
      8:57 PM<br />7/17/2025
    </time>
    <button type="button" aria-label="Notifications" className="relative ml-1 flex w-8 shrink-0 justify-center">
      <Svg><path d="M0 0h16v12H7l-4 4v-4H0z" fill="#fff" stroke="none" /><path d="M3 3.500h10M3 6.500h10M3 9.500h7" stroke="#222" /></Svg>
      <span className="absolute top-1 left-[13px] flex size-5 items-center justify-center rounded-full border border-[#888] bg-[#333] text-[11px] font-semibold">24</span>
    </button>
    <div className="mr-1 ml-3 h-10 w-px bg-[#555]"></div>
  </footer>
);

const App: React.FC = () => (
  <div className="flex h-screen flex-col overflow-hidden bg-[#efefef] font-['Noto_Sans',sans-serif] text-xs text-[#242424]">
    <TitleBar />
    <Tabs />
    <Ribbon />
    <FormulaBar />
    <Sheet />
    <SheetTabs />
    <StatusBar />
    <Taskbar />
  </div>
);

export default App;
